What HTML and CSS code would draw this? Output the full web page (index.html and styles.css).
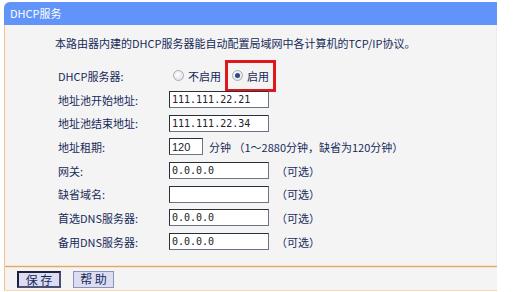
FILE: index.html
```html
<!DOCTYPE html>
<html lang="zh-CN">
<head>
    <meta charset="UTF-8">
    <title>DHCP服务</title>
    <link rel="stylesheet" href="styles.css">
</head>
<body>

<div class="panel">
    <!-- Title bar -->
    <div class="title">DHCP服务</div>

    <!-- Settings -->
    <div class="content">
        <p class="intro">本路由器内建的DHCP服务器能自动配置局域网中各计算机的TCP/IP协议。</p>

        <div class="form">
            <div class="row">
                <span class="label">DHCP服务器:</span>
                <span class="radio"><span class="dot"></span>不启用</span>
                <span class="radio mark"><span class="dot on"></span>启用</span>
            </div>
            <div class="row">
                <span class="label">地址池开始地址:</span>
                <input class="field mono" type="text" value="111.111.22.21">
            </div>
            <div class="row">
                <span class="label">地址池结束地址:</span>
                <input class="field mono" type="text" value="111.111.22.34">
            </div>
            <div class="row">
                <span class="label">地址租期:</span>
                <input class="field short" type="text" value="120">
                <span class="unit">分钟 （1～2880分钟，缺省为120分钟）</span>
            </div>
            <div class="row">
                <span class="label">网关:</span>
                <input class="field mono" type="text" value="0.0.0.0">
                <span class="hint">（可选）</span>
            </div>
            <div class="row">
                <span class="label">缺省域名:</span>
                <input class="field" type="text" value="">
                <span class="hint">（可选）</span>
            </div>
            <div class="row">
                <span class="label">首选DNS服务器:</span>
                <input class="field mono" type="text" value="0.0.0.0">
                <span class="hint">（可选）</span>
            </div>
            <div class="row">
                <span class="label">备用DNS服务器:</span>
                <input class="field mono" type="text" value="0.0.0.0">
                <span class="hint">（可选）</span>
            </div>
        </div>
    </div>

    <div class="divider"></div>

    <!-- Buttons -->
    <div class="actions">
        <button class="btn primary">保 存</button>
        <button class="btn">帮 助</button>
    </div>
</div>

</body>
</html>
```

FILE: styles.css
```css
body {
    margin: 0;
    padding: 2px 0 0 4px;
    background-color: #fff;
    font-family: "Noto Sans CJK SC", "Liberation Sans", sans-serif;
    font-size: 11px;
    color: #172a58;
}
.panel {
    width: 493px;
    background-color: #f4f4f5;
    border-bottom: 1px solid #f9d9b0;
}
.title {
    height: 23px;
    line-height: 23px;
    padding-left: 6px;
    background-color: #6194f8;
    border-radius: 6px 0 0 0;
    color: #fff;
    font-size: 11px;
}
.content {
    height: 240px;
    border-left: 1px solid #f3c48a;
    border-right: 1px solid #ececec;
    box-sizing: border-box;
    padding-top: 10px;
}
.intro {
    margin: 0;
    padding-left: 50px;
    line-height: 16px;
}
.form {
    margin-top: 13px;
    padding-left: 53px;
}
.row {
    display: flex;
    align-items: center;
    height: 23.7px;
}
.label {
    width: 111px;
    flex-shrink: 0;
}
.field {
    width: 100px;
    height: 17px;
    box-sizing: border-box;
    margin: 0;
    padding: 0 2px;
    border: 1px solid #6b7386;
    border-top-color: #2a2f3a;
    border-left-color: #2a2f3a;
    background-color: #fff;
    color: #222;
    font-family: "Liberation Sans", sans-serif;
    font-size: 11px;
    outline: none;
}
.field.mono {
    font-family: "DejaVu Sans Mono", monospace;
    font-size: 10px;
}
.field.short {
    width: 34px;
}
.unit {
    margin-left: 6px;
}
.hint {
    margin-left: 7px;
}
/* Radio buttons */
.radio {
    display: inline-flex;
    align-items: center;
    gap: 4px;
    margin-left: 4px;
}
.dot {
    width: 9px;
    height: 9px;
    border-radius: 50%;
    border: 1px solid #a9acb4;
    background: radial-gradient(circle at 40% 40%, #fff, #d9dbe0);
    position: relative;
}
.dot.on::after {
    content: "";
    position: absolute;
    left: 2px;
    top: 2px;
    width: 5px;
    height: 5px;
    border-radius: 50%;
    background-color: #2d4a86;
}
.radio.mark {
    margin-left: 4px;
    padding: 5px 4px 5px 4px;
    border: 3px solid #e0161b;
}
/* Footer */
.divider {
    height: 1px;
    background-color: #d6a97c;
    border-top: 1px solid #fbe3c6;
    border-bottom: 1px solid #fbe3c6;
    border-left: 1px solid #f3c48a;
}
.actions {
    height: 22px;
    display: flex;
    align-items: center;
    gap: 12px;
    padding-left: 12px;
    border-left: 1px solid #f3c48a;
}
.btn {
    width: 41px;
    height: 17px;
    padding: 0;
    margin: 0;
    border: 1px solid #8c93b8;
    background-color: #dcdcf3;
    color: #172a58;
    font-family: "Noto Sans CJK SC", sans-serif;
    font-size: 12px;
    line-height: 14px;
}
.btn.primary {
    width: 44px;
    border: 2px solid #1d2238;
    border-right-color: #4a5070;
    border-bottom-color: #4a5070;
}
```
